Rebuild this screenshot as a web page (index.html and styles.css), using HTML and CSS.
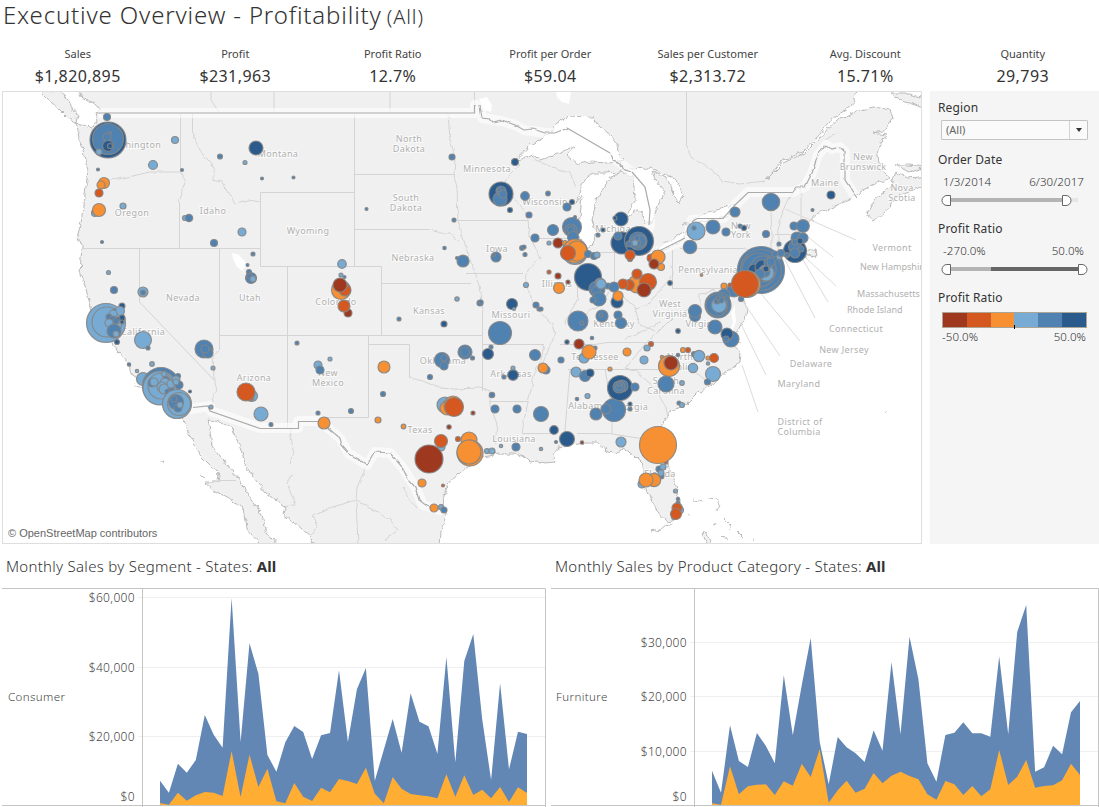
FILE: index.html
```html
<!DOCTYPE html>
<html lang="en">
<head>
<meta charset="utf-8">
<title>Executive Overview - Profitability</title>
<link rel="stylesheet" href="styles.css">
</head>
<body>
<div class="dashboard">
  <h1 class="title">Executive Overview - Profitability <span class="title-sub">(All)</span></h1>
  <div class="kpis">
    <div class="kpi"><span class="kpi-label">Sales</span><span class="kpi-value">$1,820,895</span></div>
    <div class="kpi"><span class="kpi-label">Profit</span><span class="kpi-value">$231,963</span></div>
    <div class="kpi"><span class="kpi-label">Profit Ratio</span><span class="kpi-value">12.7%</span></div>
    <div class="kpi"><span class="kpi-label">Profit per Order</span><span class="kpi-value">$59.04</span></div>
    <div class="kpi"><span class="kpi-label">Sales per Customer</span><span class="kpi-value">$2,313.72</span></div>
    <div class="kpi"><span class="kpi-label">Avg. Discount</span><span class="kpi-value">15.71%</span></div>
    <div class="kpi"><span class="kpi-label">Quantity</span><span class="kpi-value">29,793</span></div>
  </div>
  <div class="main">
    <div class="map">
      <svg class="map-svg" width="918" height="451" viewBox="3 92 918 451">
        <defs>
          <filter id="rough" x="0" y="0" width="100%" height="100%" color-interpolation-filters="sRGB">
            <feTurbulence type="fractalNoise" baseFrequency="0.16" numOctaves="2" seed="4"/>
            <feDisplacementMap in="SourceGraphic" scale="6" xChannelSelector="R" yChannelSelector="G"/>
          </filter>
          <filter id="rough-light" x="0" y="0" width="100%" height="100%" color-interpolation-filters="sRGB">
            <feTurbulence type="fractalNoise" baseFrequency="0.12" numOctaves="2" seed="9"/>
            <feDisplacementMap in="SourceGraphic" scale="4" xChannelSelector="R" yChannelSelector="G"/>
          </filter>
        </defs>
        <g class="land" filter="url(#rough)">
          <path d="M78 85L81 97 88 100 96 104 99 108 95 113 97 120 92 129 86 127 76 123 78 130 79 140 83 150 85 160 88 170 85 195 83 215 78 233 82 247 81 258 80 275 86 290 90 303 92 312 99 325 112 343 118 352 129 364 131 374 138 378 142 386 155 390 165 400 176 412 184 420 188 432 195 445 200 455 210 465 219 475 218 482 204 482 213 490 230 499 243 508 246 528 265 550H281L267 533 262 515 247 492 238 478 227 465 212 445 209 425 207 419 222 423 232 428 237 440 242 453 247 468 257 482 267 493 285 507 283 515 297 525 309 535 316 550H440L441 530 447 515 443 508 444 495 448 485 458 474 468 467 483 457 500 454 515 454 525 457 530 462 538 461 545 463 555 462 553 453 559 448 567 446 583 443 598 443 607 451 614 454 623 448 633 455 643 465 643 482 650 498 658 512 667 522 678 520 682 508 678 493 672 475 667 462 662 445 662 425 670 412 687 403 697 393 707 387 717 380 727 372 740 362 741 352 733 345 730 336 738 331 745 320 747 308 743 298 757 290 763 280 768 267 783 255 800 258 808 255 816 258 815 250 806 250 803 237 808 223 817 213 833 207 853 198 863 190 877 183 890 178 880 170 878 155 882 140 888 135 873 133 884 131 893 118 890 110 873 107 853 112 838 120 827 130 818 140 805 153 783 163 765 181 783 160 803 152 820 134 833 118 853 105 857 85Z"/>
          <path d="M40 92L48 100 58 108 66 116 76 123 78 116 71 106 65 95 59 90Z"/>
          <path d="M867 212L873 222 883 213 897 197 930 183V176L908 178 896 173 889 188 874 200ZM890 93L905 93 930 100V110L900 100ZM896 165L910 172 925 167 908 165Z"/>
          <path d="M703 530L708 537 711 545 706 544 702 535Z"/>
        </g>
        <g class="islands" filter="url(#rough)">
          <path d="M693 500L703 502M707 498L717 499 720 504 717 511M724 518L731 525 729 530M737 531L743 537M723 535L729 542M651 532L660 530 673 524M162 460L163 465M200 475L205 478M884 413L887 411M134 385L141 388M800 255L815 257 814 248M713 525L718 523M753 537L754 540M688 514L690 517"/>
        </g>
        <g class="water" filter="url(#rough)">
          <path d="M514 162L530 145 550 133 557 123 567 116 593 117 600 127 610 134 617 143 618 153 624 160 610 163 590 162 578 164 567 155 576 145 557 154 540 160 533 155 520 160Z"/>
          <path d="M620 172L606 173 593 173 584 180 580 190 576 204 582 195 580 217 578 233 583 250 592 247 596 233 592 220 597 197 602 193 607 183 613 175Z"/>
          <path d="M620 171L633 177 635 200 628 213 625 219 637 210 642 212 646 225 650 222 656 211 662 196 665 191 656 180 652 171 666 178 670 186 678 203 683 195 675 178 660 173 650 168 630 169Z"/>
          <path d="M650 252L667 242 687 231 681 241 672 247 656 253ZM683 225L697 217 717 210 735 204 734 212 723 218 697 223Z"/>
        </g>
        <g class="lakes"><path d="M232 253l7 2 5 5 3 6-4 3 2 4-8-6-4-8zM479 99l8-2 5 8-1 7-6-2-3-6zM556 92h15l-2 12-7-2-5-5z"/><path d="M735 305l-4 8 2 9-3 10 3-2 3-9-1-8z"/></g>
        <g class="states">
          <path d="M211 92V100L219 112M274 92V112M390 92V113M474.500 92V106M686.500 92V145M180.500 114V172M179.500 202V248.500M82 248.500H260.500V192.500H354.500M192.500 113V133M260.500 248V266.500H354.500M354.500 113V266.500H381.500V335.500M354 229.500H430M354 174.500H455M482.500 310V335.500H219.500M139.500 248V302L214 380M219.500 350V248M287.500 266V428M368.500 335V417.500H320M368.500 344.500H409.500V377M381 283.500H471M483 344.500H544M482.500 335V391M489 401.500H528M458 220.500H528M466 273.500H523M535 238.500H578M568 369.500H670M560 344.500H595L607 342.500H741M570 369L565 430M605 369L612 410V434L641 438.500H657M577 433.500H612M598 252.500H615M577.500 270V298M614.500 252V284M614 252.500H650M672.500 250V288.500H738M680 248.500H743M670 372L690 368 712 385M775 234.500H800M218 480.500H236M522 433.500H553"/>
        </g>
        <g class="states" filter="url(#rough-light)">
          <path d="M686 145L692 158 714 171 722 181 740 184 765 181M102 179L112 180 128 177 150 172H181M181 172L186 180 178 202M193 133L200 150 208 160 214 170 214 182 221 180 228 193 235 203 248 200 260 202M430 229L440 233 450 233 459 241M448 113L450 140 455 157 454 175 457 188 458 220 463 238 470 260 476 275 480 285 483 310M214 380L213 355 219 350M214 380L217 390 212 400 211 407M409 377L425 382 440 388 455 389 480 388 490 392M544 344L541 360 536 366 530 395 524 420 522 434M490 391V405L497 424 495 445M528 218L529 235 536 250 541 258 528 270 525 285 532 300 540 312 552 325 555 335 548 350 541 368M505 180L506 190 520 205 528 215M514 162L520 165 505 180M534 160L555 168 570 173 576 187M565 430L568 443M578 298L571 312 565 325M614 284L602 303 590 310 578 325M672 265L673 275 660 290 650 303 636 308 615 290M738 288L748 310M645 344L625 369 636 371 655 388 666 408 668 417M645 344L660 330 675 315 700 306 700 295 715 290M635 307L640 325 655 331M625 340L660 322M743 248L750 253 743 265 752 275M770 192L772 235V250M793 192L783 210 778 230V260M801 187V220M838 132L825 140M290 428L293 450 290 465M293 475L287 483 295 505 285 507M367 467L357 487 356 500 335 506 312 515 318 528 310 535M357 500L365 505 390 520 398 530 385 540M403 488L410 500 417 508M356 500L358 545"/>
        </g>
        <path class="halo" d="M97 113H475V105L480 106 482 118 502 121 515 125 524 130 545 133 555 133 567 128 610 153 620 163 632 172 645 187 650 210 650 225 642 243 650 256 667 247 688 238 692 220 723 218 735 205 748 192H793L805 187 812 173 818 155 826 145 832 149 840 147 845 152V180L855 196M185 410L210 406 211 411 260 428H298V421H320L328 428 340 438 348 453 367 465 375 452 390 453 403 468 415 487 423 505 443 511"/>
        <path class="border" d="M97 113H474.500V105M567 128L610 153M632 172L645 187 650 210 649 225M655 253L667 247 685 238M692 222L697 218.500H723L735 205 748 192.500H793M193 407.500L208 406 210 411 260 428.500H298.500V421.500H320"/>
        <path class="border" filter="url(#rough-light)" d="M475 105L480 106 482 118 490 119 493 122 502 120 515 125 524 130 533 129 545 133 555 133 567 128M610 153L612 160 620 163 625 170 632 172M793 192L797 187 805 187 812 173 818 155 826 145 832 149 840 147 845 152V180L857 198M320 421L328 428 340 438 342 446 348 453 358 459 367 465 375 452 390 453 403 468 409 480 415 487 419 500 427 506 443 511"/>
        <path class="leaders" d="M785 209L856 240M803 233L833 257M806 258L836 286M803 260L828 302M785 260L815 318M758 290L800 341M742 300L780 356M740 322L766 375M742 365L758 412"/>
        <g class="labels" id="labels"></g>
        <g id="marks"></g>
      </svg>
      <span class="credit">© OpenStreetMap contributors</span>
    </div>
    <aside class="filters">
      <h2 class="filter-title">Region</h2>
      <div class="select"><span>(All)</span><span class="select-btn"><i class="caret"></i></span></div>
      <h2 class="filter-title title-date">Order Date</h2>
      <div class="range"><span>1/3/2014</span><span>6/30/2017</span></div>
      <svg class="slider" width="148" height="14" viewBox="0 0 148 14">
        <path class="track-rest" d="M5 7H137"/><path class="track" d="M5 7H125"/>
        <path class="thumb" d="M9.500 2.500V12.500H6A5 5 0 0 1 6 2.500ZM121.500 2.500V12.500H125A5 5 0 0 0 125 2.500Z"/>
      </svg>
      <h2 class="filter-title title-ratio">Profit Ratio</h2>
      <div class="range"><span>-270.0%</span><span>50.0%</span></div>
      <svg class="slider" width="148" height="14" viewBox="0 0 148 14">
        <path class="track" d="M5 7H50"/><path class="track-dark" d="M50 7H140"/>
        <path class="thumb" d="M9.500 2.500V12.500H6A5 5 0 0 1 6 2.500ZM137.500 2.500V12.500H141A5 5 0 0 0 141 2.500Z"/>
      </svg>
      <h2 class="filter-title title-legend">Profit Ratio</h2>
      <div class="legend"><i class="m"></i><i class="r"></i><i class="o"></i><i class="l"></i><i class="b"></i><i class="d"></i></div>
      <div class="range legend-range"><span>-50.0%</span><span>50.0%</span></div>
    </aside>
  </div>
  <div class="trends">
    <section class="trend trend-left">
      <h2 class="trend-title">Monthly Sales by Segment - States: <b>All</b></h2>
      <svg class="trend-svg" width="544" height="219" viewBox="2 588 544 219">
        <path class="grid" d="M138 597.500H545M138 667.500H545M138 736.500H545"/>
        <text class="row-name" x="8" y="701">Consumer</text>
        <g class="ticks"><text x="135" y="602">$60,000</text><text x="135" y="672">$40,000</text><text x="135" y="741">$20,000</text><text x="135" y="801">$0</text></g>
        <g id="segment" data-x="160" data-step="8.95"></g>
        <path class="frame" d="M2 588.500H545.500V807M142.500 588V807M2 805.500H546"/>
      </svg>
    </section>
    <section class="trend trend-right">
      <h2 class="trend-title">Monthly Sales by Product Category - States: <b>All</b></h2>
      <svg class="trend-svg" width="548" height="219" viewBox="551 588 548 219">
        <path class="grid" d="M690 642.500H1098M690 696.500H1098M690 751.500H1098"/>
        <text class="row-name" x="556" y="701">Furniture</text>
        <g class="ticks"><text x="687" y="647">$30,000</text><text x="687" y="701">$20,000</text><text x="687" y="756">$10,000</text><text x="687" y="801">$0</text></g>
        <g id="category" data-x="712" data-step="8.976"></g>
        <path class="frame" d="M551 588.500H1098.500V807M694.500 588V807M551 805.500H1099"/>
      </svg>
    </section>
  </div>
</div>
<script src="app.js"></script>
</body>
</html>
```
FILE: styles.css
```css
* { box-sizing: border-box; }
body { margin: 0; background: #fff; color: #333; font-family: "Noto Sans", "Open Sans", sans-serif; overflow: hidden; }
h1, h2 { margin: 0; font-weight: 400; }
.dashboard { width: 1099px; height: 807px; overflow: hidden; }
.title { height: 44px; padding: 0 0 0 3px; font-size: 24px; line-height: 30px; font-weight: 300; letter-spacing: .84px; white-space: nowrap; }
.title-sub { font-size: 20px; letter-spacing: .9px; margin-left: -2px; }
.kpis { display: flex; height: 47px; margin-left: -1px; }
.kpi { flex: none; width: 157.500px; display: flex; flex-direction: column; align-items: center; }
.kpi-label { font-size: 11px; line-height: 20px; color: #444; }
.kpi-value { font-size: 16px; line-height: 25px; letter-spacing: .42px; }
.main { display: flex; gap: 8px; padding-left: 2px; height: 453px; }
.map { position: relative; width: 920px; border: 1px solid #dedede; }
.map-svg { display: block; }
.credit { position: absolute; left: 5px; bottom: 3px; font: 11px/14px "Liberation Sans", sans-serif; color: #666; }
.land path { fill: #f0f0f0; stroke: #b9b9b9; stroke-width: 1; }
.islands path { fill: none; stroke: #bbb; stroke-width: 1; }
.water path { fill: #fff; stroke: #b9b9b9; stroke-width: 1; }
.lakes path { fill: #fff; }
.states path { fill: none; stroke: #d4d4d4; stroke-width: 1; }
.halo { fill: none; stroke: #fff; stroke-opacity: .6; stroke-width: 10; stroke-linejoin: round; }
.border { fill: none; stroke: #aaa; stroke-width: 1.200; }
.leaders { fill: none; stroke: #dcdcdc; stroke-width: 1; }
.labels text { font-size: 9px; letter-spacing: .35px; text-anchor: middle; fill: #b0b0b0; stroke: #fff; stroke-opacity: .7; stroke-width: 2px; paint-order: stroke; }
.labels .start { text-anchor: start; letter-spacing: .02px; }
.mark { stroke: #858585; stroke-width: 1.200; stroke-opacity: .9; }
.m { fill: #9e3920; background: #9e3920; }
.r { fill: #d4581f; background: #d4581f; }
.o { fill: #f79033; background: #f79033; }
.l { fill: #77abd3; background: #77abd3; }
.b { fill: #4f82b1; background: #4f82b1; }
.d { fill: #2a5b8c; background: #2a5b8c; }
.filters { width: 169px; padding: 9px 11px 0 8px; background: #f5f5f5; }
.filter-title { font-size: 12px; line-height: 16px; height: 16px; letter-spacing: .15px; }
.select { display: flex; justify-content: space-between; height: 20px; width: 147px; margin: 4px 0 0 3px; padding-left: 4px; border: 1px solid #c4c4c4; border-radius: 1px; background: #fafafa; font-size: 11px; line-height: 18px; color: #666; }
.select-btn { display: flex; align-items: center; justify-content: center; width: 18px; border-left: 1px solid #d4d4d4; }
.caret { border: 3.500px solid transparent; border-top: 4px solid #333; border-bottom: 0; }
.title-date { margin-top: 12px; }
.title-ratio { margin-top: 14px; }
.title-legend { margin-top: 14px; }
.range { display: flex; justify-content: space-between; width: 146px; padding: 6px 0 1px 5px; font-size: 11.500px; line-height: 15px; font-weight: 300; letter-spacing: .1px; color: #333; }
.slider { display: block; margin: 3px 0 0 3px; }
.slider path { fill: none; stroke-width: 4; }
.slider .track-rest { stroke: #e6e6e6; }
.slider .track { stroke: #b4b4b4; }
.slider .track-dark { stroke: #666; }
.slider .thumb { fill: #fff; stroke: #666; stroke-width: 1; }
.legend { position: relative; display: flex; width: 145px; height: 16px; margin: 6px 0 0 4px; border: 1px solid #aaa594; }
.legend i { flex: 1; }
.legend::after { content: ""; position: absolute; left: 71px; top: 12px; width: 1px; height: 4px; background: #000; }
.legend-range { width: 148px; padding: 1px 0 0 4px; }
.trends { display: flex; justify-content: space-between; height: 263px; }
.trend-left { width: 546px; padding-left: 2px; }
.trend-right { width: 548px; }
.trend-title { height: 44px; padding: 11px 0 0 4px; font-size: 15px; line-height: 22px; font-weight: 350; letter-spacing: .28px; white-space: nowrap; }
.trend-title b { font-weight: 700; letter-spacing: 0; }
.trend-svg { display: block; }
.grid { fill: none; stroke: #efefef; }
.frame { fill: none; stroke: #c4c4c4; stroke-width: 1; }
.row-name { font-size: 11.500px; font-weight: 300; fill: #444; letter-spacing: .4px; }
.ticks text { font-size: 12px; font-weight: 300; fill: #444; text-anchor: end; letter-spacing: .35px; }
.area-top { fill: #6287b4; }
.area-low { fill: #ffad33; }
```
FILE: app.js
```js
const NS = 'http://www.w3.org/2000/svg';
function add(parent, tag, attrs, text) {
  const el = document.createElementNS(NS, tag);
  for (const k in attrs) el.setAttribute(k, attrs[k]);
  if (text) el.textContent = text;
  parent.appendChild(el);
}

/* State names: centre x, baseline y, text */
const labels = [
  [134,148,'Washington'],[278,157,'Montana'],[132,216,'Oregon'],[213,214,'Idaho'],[308,234,'Wyoming'],
  [183,301,'Nevada'],[250,301,'Utah'],[409,142,'North'],[409,152,'Dakota'],[406,201,'South'],[406,211,'Dakota'],
  [487,172,'Minnesota'],[545,205,'Wisconsin'],[497,252,'Iowa'],[413,261,'Nebraska'],[336,305,'Colorado'],
  [429,314,'Kansas'],[511,318,'Missouri'],[557,287,'Illinois'],[616,232,'Michigan'],[741,229,'New'],[741,238,'York'],
  [708,273,'Pennsylvania'],[670,307,'West'],[670,317,'Virginia'],[825,186,'Maine'],[863,160,'New'],[863,170,'Brunswick'],
  [902,191,'Nova'],[902,201,'Scotia'],[143,335,'California'],[254,381,'Arizona'],[328,376,'New'],[328,386,'Mexico'],
  [443,364,'Oklahoma'],[511,377,'Arkansas'],[420,433,'Texas'],[514,442,'Louisiana'],[588,409,'Alabama'],[630,410,'Georgia'],
  [595,360,'Tennessee'],[614,327,'Kentucky'],[703,327,'Virginia'],[680,360,'North'],[680,370,'Carolina'],
  [666,384,'South'],[666,394,'Carolina'],[660,477,'Florida'],[892,251,'Vermont'],[856,332,'Connecticut'],
  [844,353,'New Jersey'],[811,367,'Delaware'],[799,387,'Maryland'],[800,425,'District of'],[799,435,'Columbia'],
  [860,270,'New Hampshire','start'],[857,297,'Massachusetts','start'],[847,313,'Rhode Island','start']
];
for (const [x, y, t, c] of labels) add(document.getElementById('labels'), 'text', c ? {x, y, class: c} : {x, y}, t);

/* City marks: x y radius colour-class */
const marks = `
107 117 3.5 b;108 140 18 d;108 139 15.5 b;107 137 4 b;110 133 1.5 b;108 146 5.5 d;110 146 2.5 d;99 152 3 l;175 140 3.5 l;153 165 4.5 l;98 169.5 1.5 b;182 170 1.5 b
256 148 7 d;220 156.500 2.500 b;245 162.500 2 l;262 178.500 1.500 b;293.500 177.500 1.500 b;104 183 5.500 o;101 185 4 o;99 193 4 r;95 213 3.500 l;99 210 6.500 o
123 206 3 l;102 242 1.5 b;185 218 2.5 l;189 218 3.7 b;242 232 4 l;214 243 3.5 b;253 254 2 b;247.5 265 1.5 b;249 272 2.5 b;251 278 5.5 b;249 276 2.5 b;253 279 3 l
108.5 272.5 2 l;114 290 3.5 b;143 292 5 l;143 292.5 2.5 b
106 323 19.5 l;107 322 15 l;122 306 3 d;115 311 2 d;120 311 4.5 l;113 314 4 l;109 317 3 b;122 318 3 d;118 319 2 d;113 319 3 b;116 321 3 b;122 322 2 d;109 323 4 l;114 331 7 b;116 334 3 l;117 342 2.500 d
143 340 8.5 l;148 348 2 b;204 349 9 b;208 353 5 b;205 349 4 b;213 368 2 l;129 364.5 1.7 b;137 371 1.7 l;152 364 2.3 l;178 376 2.5 b;143 379 6.5 l;161 386 18.5 b;160 388 17 l;161 386 13 l
152 383 4 b;154 382 4 l;164 374 2.5 l;166 380 3.5 b;165 383 5 l;162 387 5 l;164 389 5 l;171 384 4 l;176 380 4 l;179 385 4 b;176 382 3 l;168 392 3 b;172 391 3 b;178 393 3 b;190 391.5 1.5 d
177 404 14.5 l;179 404 11.5 l;176 402 7.500 b;178 408 4 b;174 399 3 b;180 405 3 l;252 396 5.500 l;250 397 4 r;246 392 9 r;261 414 7 l;211 407 2 l;271 424.500 2 b;297 343 2 b
452 157 3 b;515 162 3.500 d;501 194 12 d;500 199 7 b;501 191 5 b;503 194 4 b;499 190 2 b;525 196 4.300 b;548 193.500 2.300 b;572 202 2.500 d;567 207 4 b;510 210 2.500 d;529 215 3 b
366.500 209 1.500 b;454 220 2 b;575 217 1.500 b;535 238 4 b;553 230 5.500 b;572 227 9.500 b;571 230 6 b;571 230 3.500 b;573 237 5.500 b;549 243 2 l;558 243 5 m;565 243 2.500 o
575 252 12.5 l;575 251 12 o;577 251 10 o;568 253 7.5 r;588 254 3.5 b;594 256 3.5 b;597 255 3 l;603 230 2 d;598 235 2 b;444.5 248 1.7 b;457 258 1.5 b;463 261 6 b
522 248 2.300 b;524 247 2 b;525 254.500 2 b;496 257 5 b;494 255 1.500 b;549 272 2 r;558 276 3 m;568 282 2 m;577 281 1.500 m;559 288 5.500 o;588 277 13.500 d
597 289 8 b;600 283 5 l;596 291 4.500 b;599 299 7 b;593 300 3 b;602 316 6 b;601 315 2 b;608 286 3 b;578 321 10 b;582 323 2 b;526 285 2.500 l;457 299 2.200 l;480 303 3 b;481 302 2 b
512 304 5.5 d;514 309 1.5 l;536 305 3 b;539 309 2 b;541 309 2 b;399 319 2 b;342 264 4.3 l;341 275 2 l;344.5 277 1.5 b;341 290 9.5 o;345 290 6 r;340 285 7 m;348 313 4 m;344 306 6 r
444 324 3 d;500 333 11.500 b;488 354 5.500 d;491 347 2 b;442 360 7.500 b;444 366 4 b;444 358 3 b;465 352 7 b;465 352 4.500 b;472.500 358 2 b;430 377 2.500 b;383 394 2.500 b;384 367 6 o
318 365 4 l;320 370 4 b;330 359 2 l;318 413 2 b;351 411 2.5 b;324 423 6 o;378 420 3 o;403.5 426.5 2.3 o;445 405 8 l;447 408 7 o;453 405 9 o;454 407 9.5 r;473 413 2 m;449 427 2.2 m
441 447 4 l;441 441 6.5 r;429 459 14 m;458 439 2.500 r;469 440 8 o;470 453 13 o;469 452 12 o;487 451 2.500 l;492 451 3 l;422 483 4 o;443 485.500 1.500 r;434 508 4 o;441 507 2.500 l;444 510 3 b
501 446 1.7 l;516 447 4 b;541 449 1.7 l;556 442 1.5 b;554 430 4.3 d;567 439 7.5 d;582 442.5 1.7 m;541 414 7.5 b;517 409 4 b;495 409 4 b;492 395 2.7 b;535 355 5.500 b;546 370 4 b;543 368 5 o
513 375 5.3 d;504 377 2 b;513 368 2 l;561 360 3 b;567 342 2.2 d;579 344 5 m;592 338 1.7 b;595 348 2 b;584 358 5 l;589 352 7 o;576 372 5 l;585 376 5.5 b;590 373 4 d;587.5 396 2.5 l;577 399 1.7 b
596 414 6 b;614 410 11.500 b;606 409 5 b;620 388 12.500 d;622 386 6 b;619 387 6 b;619 387 3.500 b;619 384 2 b;635 387 4 b;621 323 5.500 b;610 369 2 o;627 352 4 o;651 344 2.500 r;647 348 3 l;644 360 4 l
678 331 2.300 d;683 350 2.500 o;688 350 2.500 r;678 355 1.700 b;662 357 1.700 o;669 366 10.500 o;668 362 4 r;671 363 7 m;666 384 8 b;682 383 2.300 l;630 404 2 d;630 409 2 b;679 403 2 b;682 405 2.500 l
693 368 4.7 l;694 354 2.500 b;696 355 3 b;699 356 5.700 l;708 358 2 o;714 358 4.500 r;708 363.500 1.700 l;713 374 7.500 l;707.500 382 3 b;715 327 7 b;731 339 8 b;727 334 6 d;726 339 3 b
621 442 5 l;666 462 2 r;658 445 18.5 o;659 469 3 b;663 467 3 l;661 476 3 b;661 473 3 l;642 484 4 l;654 480 6.7 o;646 480 7 o;675.500 491 2 l;678 499 1.700 b;678 503 2 b;679 510 4.500 l;674 517 2.500 l;677 508 5 r;676 514 5.500 r
621 219 7 d;615 218 2 d;622 243 11 d;618 236 4 b;639 241 14.5 d;638 241 9 b;640 241 6 b;635 243 5.5 b;637 238 3 b;635 243 3 l;629 244 3 b;630 259 2.5 r;630 255 5 r;651 258 4 r;658 257 7 o;661 267 3.5 o;654 264 5 m
637 284 9 o;637 274 5 r;648 282 8.500 r;629 285 5.300 r;623 284 5 r;644 290 7 m;601 284 5 l;614 287 5 b;617 302 6 d;618 296 5 o;618 315 4 b;696 231 9 l;694 228 2 b;713 227 7 b;735 212 5 b;726 232 4 b
744 228 2.500 d;740 226 2 b;690 247 6.700 b;771 202 8.700 b;766 234 3.500 b;794 226 4 b;803 226 6.300 b;779 244 2 b;831 195 4 d;812.500 210 1.500 b;795 251 11.500 d;797 238 6 b;803 238 5 b;795 247 6.500 b
795 253 5 b;795 242 3 b;800 241 3 d;801 249 3 b;787 255 2.500 b;761 270 23.500 b;761 270 20.500 b;759 270 17 b;763 269 13 b;754 270 6 d;762 267 7 d;766 273 8 l;765 272 5 b;760 274 5 b;769 263 5 b;771 262 4 b;766 269 3 d
775 254 3 b;779 257 2.5 l;781 253 3.500 b;741 299 2.500 b;734 290 7 b;724 286 3 o;730 285 2 r;747 284 13.5 o;745 284 13.5 r;724 295 6 b;718 305 13 b;717 305 11 b;719 305 7.500 l;717 301 3 b;721 300 3 b;718 298 2 b
695 316 5.5 b;695 311 6.5 b;701.5 275 1.3 o;670 283 2.3 d`;
const markLayer = document.getElementById('marks');
for (const m of marks.trim().split(/[;\n]/)) {
  const [cx, cy, r, c] = m.trim().split(' ');
  add(markLayer, 'circle', {cx, cy, r, class: 'mark ' + c});
}

/* Monthly series as distance below the top of the trend band, in thirds of a pixel */
const series = {
  segment: [
    [692,728,641,668,630,495,554,593,144,576,280,371,615,665,577,528,546,627,556,549,361,576,418,354,692,599,507,608,430,515,529,611,321,637,333,252,508,690,400,658,545,552],
    [759,764,728,752,736,726,728,738,603,741,614,711,656,754,760,699,740,753,713,727,687,693,702,653,731,760,681,716,732,736,739,745,673,740,676,735,719,745,711,756,712,729]
  ],
  category: [
    [662,728,526,633,651,549,588,640,376,556,405,264,576,703,561,592,610,636,541,602,336,553,260,387,640,695,555,548,517,550,550,560,319,553,246,165,665,652,587,613,487,453],
    [760,764,649,733,709,704,703,735,694,707,641,681,597,758,721,692,728,716,669,700,677,665,678,688,733,749,693,703,735,708,739,718,600,705,680,630,713,708,706,691,641,675]
  ]
};
for (const id in series) {
  const g = document.getElementById(id);
  const x0 = +g.dataset.x, step = +g.dataset.step;
  series[id].forEach((ys, i) => {
    const pts = ys.map((y, k) => (x0 + k * step).toFixed(1) + ',' + (550 + y / 3).toFixed(1));
    pts.push((x0 + 41 * step).toFixed(1) + ',805', x0 + ',805');
    add(g, 'polygon', {points: pts.join(' '), class: i ? 'area-low' : 'area-top'});
  });
}
```
